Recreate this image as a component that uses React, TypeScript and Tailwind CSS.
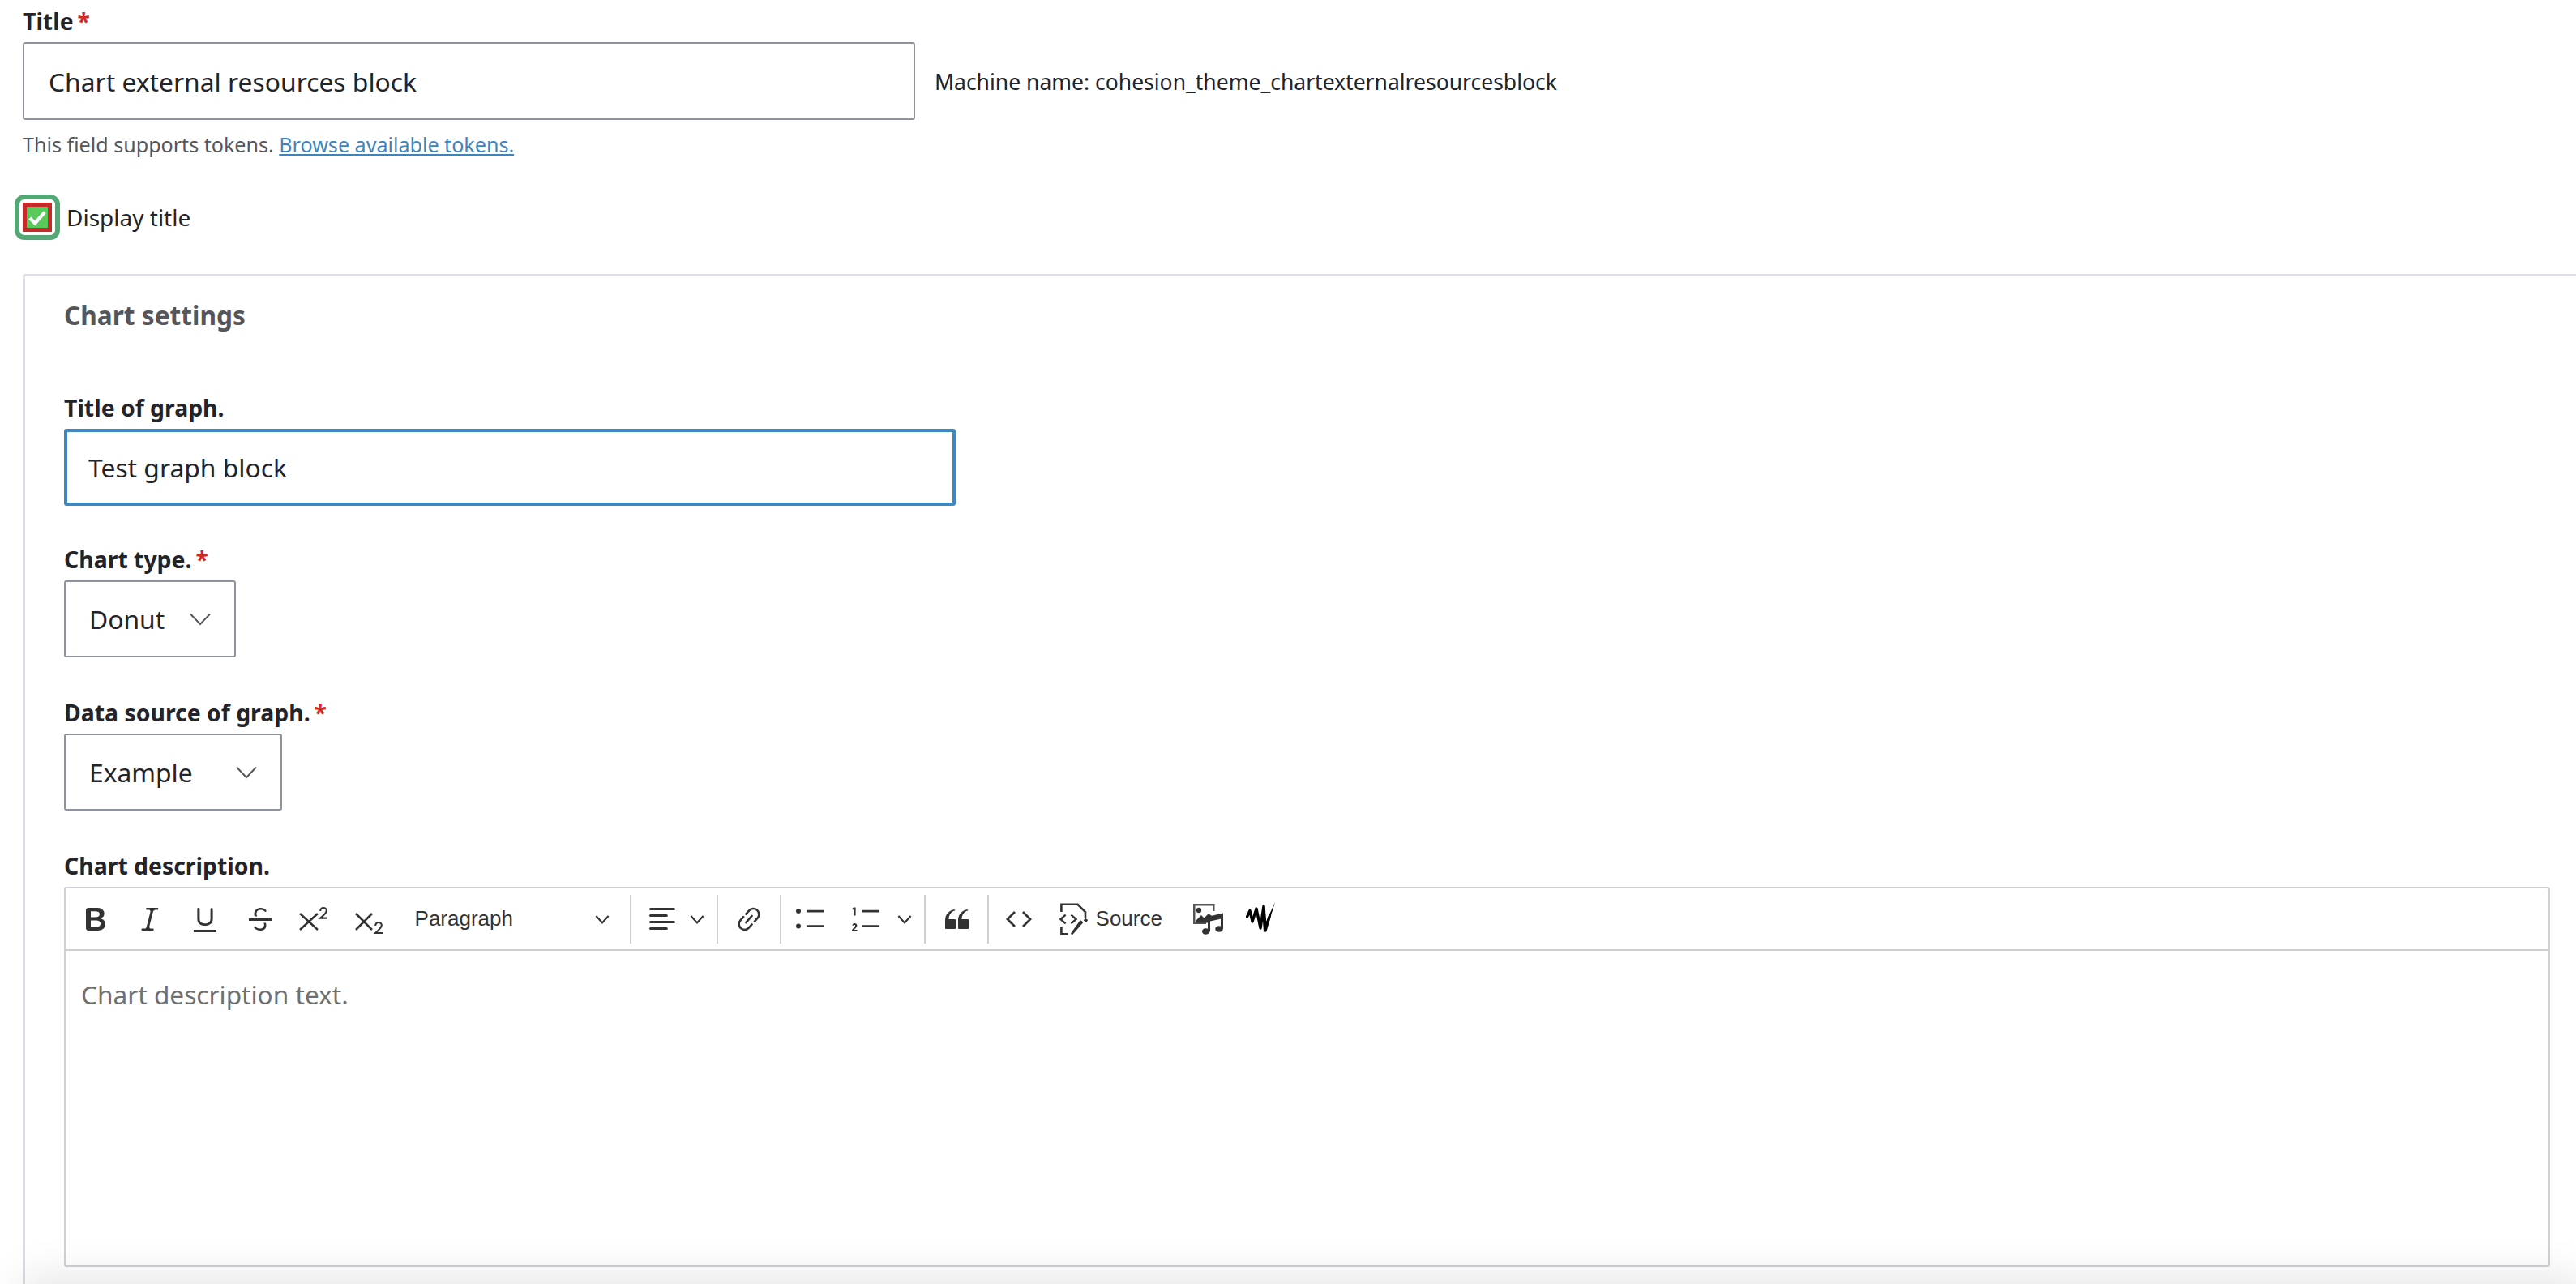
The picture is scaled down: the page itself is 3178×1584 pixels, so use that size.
import type { ReactNode } from "react";

const font = "font-['Noto_Sans','Open_Sans',sans-serif]";

function Icon({ children, className = "" }: { children: ReactNode; className?: string }) {
  return (
    <svg viewBox="0 0 20 20" className={`w-[40px] h-[40px] text-[#333333] fill-current ${className}`}>
      {children}
    </svg>
  );
}

function Btn({ w, children }: { w: string; children: ReactNode }) {
  return <div className={`${w} h-[40px] flex items-center justify-center shrink-0`}>{children}</div>;
}

function Sep() {
  return <div className="w-[2px] h-[60px] bg-[#cfd0d6] shrink-0" />;
}

function Chevron() {
  return (
    <svg viewBox="0 0 10 10" className="w-[20px] h-[20px] fill-none stroke-[#333333] stroke-[1.1]">
      <path d="M1.2 3 5 7.2 8.8 3" />
    </svg>
  );
}

function SelectChevron() {
  return (
    <svg viewBox="0 0 26 16" className="w-[26px] h-[16px] fill-none stroke-[#55565b] stroke-[2]">
      <path d="M1 1.500 13 14 25 1.500" />
    </svg>
  );
}

function Label({ text, required }: { text: string; required?: boolean }) {
  return (
    <div className="text-[28.4px] leading-[36px] font-bold text-[#232429] flex">
      <span>{text}</span>
      {required && <span className="text-[#d0291f] ml-[5px]">*</span>}
    </div>
  );
}

function FakeSelect({ value, w }: { value: string; w: string }) {
  return (
    <div className={`${w} h-[95px] mt-[8px] border-2 border-[#8e929c] rounded-[3px] flex items-center justify-between pl-[29px] pr-[29px] text-[31.8px] text-[#232429] bg-white`}>
      <span>{value}</span>
      <SelectChevron />
    </div>
  );
}

function Toolbar() {
  const line = "fill-none stroke-[#333333]";
  return (
    <div className="h-[77px] border-b-2 border-[#cfd0d6] flex items-center pl-[3px]">
      <Btn w="w-[67.6px]">
        <Icon>
          <path d="M10.187 17H5.773c-.637 0-1.092-.138-1.364-.415-.273-.277-.409-.718-.409-1.323V4.738c0-.617.14-1.062.419-1.332.279-.27.73-.406 1.354-.406h4.68c.69 0 1.288.041 1.793.124.506.083.96.242 1.36.478.341.197.644.447.906.75a3.262 3.262 0 0 1 .808 2.162c0 1.401-.722 2.426-2.167 3.075C15.05 10.175 16 11.315 16 13.01a3.756 3.756 0 0 1-2.296 3.504 6.1 6.1 0 0 1-1.517.377c-.571.073-1.238.11-2 .11zm-.217-6.217H7v4.087h3.069c1.977 0 2.965-.69 2.965-2.072 0-.707-.256-1.22-.768-1.537-.512-.319-1.277-.478-2.296-.478zM7 5.13v3.619h2.606c.729 0 1.292-.067 1.69-.2a1.6 1.6 0 0 0 .91-.765c.165-.267.247-.566.247-.897 0-.707-.26-1.176-.778-1.409-.519-.232-1.31-.348-2.375-.348H7z" />
        </Icon>
      </Btn>
      <Btn w="w-[67.6px]">
        <Icon>
          <path d="m9.586 14.633.021.004c-.036.335.095.655.393.962.082.083.173.15.274.201h1.474a.6.6 0 1 1 0 1.2H5.304a.6.6 0 0 1 0-1.2h1.15c.474-.07.809-.182 1.005-.334.157-.122.291-.32.404-.597l2.416-9.55a1.053 1.053 0 0 0-.281-.823 1.12 1.12 0 0 0-.442-.296H8.15a.6.6 0 0 1 0-1.2h6.443a.6.6 0 1 1 0 1.2h-1.195c-.376.056-.65.155-.823.296-.215.175-.423.439-.623.79l-2.366 9.347z" />
        </Icon>
      </Btn>
      <Btn w="w-[67.6px]">
        <Icon>
          <path d="M3 18v-1.5h14V18zm2.2-8V3.6c0-.4.4-.6.8-.6.3 0 .7.2.7.6v6.2c0 2 1.3 2.8 3.2 2.8 1.9 0 3.4-.9 3.4-2.9V3.6c0-.3.4-.5.8-.5.3 0 .7.2.7.5V10c0 2.7-2.2 4-4.9 4-2.6 0-4.7-1.2-4.7-4z" />
        </Icon>
      </Btn>
      <Btn w="w-[67.6px]">
        <Icon>
          <path d="M3 9.500h14V11H3z" />
          <path d="M6.500 8.200C6.300 7.700 6.200 7 6.300 6.300c.2-2 1.900-3.300 4-3.300 1.300 0 2.600.5 3.400 1.500.2.3.2.6-.1.9-.3.2-.6.2-.9-.1-.6-.7-1.400-1-2.400-1-1.400 0-2.400.8-2.600 2-.1.7.1 1.400.5 1.900zM13.400 12.300c.3.5.4 1.200.3 1.900-.2 2-1.800 2.800-3.800 2.800-1.500 0-2.800-.6-3.600-1.600-.2-.3-.2-.6.1-.9.3-.2.6-.2.9.1.6.8 1.500 1.100 2.600 1.100 1.400 0 2.300-.5 2.500-1.800.1-.6 0-1.200-.3-1.600z" />
        </Icon>
      </Btn>
      <Btn w="w-[67.6px]">
        <Icon>
          <path d="M1 6.500 12 16.500M12 6.500 1 16.500" className={`${line} stroke-[1.25]`} />
          <path d="M13.600 5c.1-1.300.8-2 1.900-2 1.100 0 1.900.8 1.900 1.800 0 1-.7 1.700-1.500 2.500l-2.300 2h4.400" className={`${line} stroke-[1.05]`} />
        </Icon>
      </Btn>
      <Btn w="w-[67.6px]">
        <Icon>
          <path d="M1.500 6.500 11.500 16.500M11.500 6.500 1.500 16.500" className={`${line} stroke-[1.25]`} />
          <path d="M13.600 14c.1-1.300.8-2 1.900-2 1.100 0 1.900.8 1.900 1.800 0 1-.7 1.700-1.500 2.500l-2.300 2.200h4.400" className={`${line} stroke-[1.05]`} />
        </Icon>
      </Btn>
      <div className="w-[287px] shrink-0 flex items-center justify-between pl-[22px] pr-[24px] font-['Liberation_Sans',sans-serif] text-[26px] text-[#333333]">
        <span>Paragraph</span>
        <Chevron />
      </div>
      <Sep />
      <div className="w-[105px] shrink-0 flex items-center pl-[18px]">
        <Icon>
          <path d="M2 3.750c0 .414.336.75.75.75h14.500a.75.75 0 1 0 0-1.500H2.750a.75.75 0 0 0-.75.75zm0 8c0 .414.336.75.75.75h14.500a.75.75 0 1 0 0-1.500H2.750a.75.75 0 0 0-.75.75zm0 4c0 .414.336.75.75.75h9.929a.75.75 0 1 0 0-1.500H2.750a.75.75 0 0 0-.75.75zm0-8c0 .414.336.75.75.75h9.929a.75.75 0 1 0 0-1.500H2.750a.75.75 0 0 0-.75.75z" />
        </Icon>
        <span className="ml-[13px] flex">
          <Chevron />
        </span>
      </div>
      <Sep />
      <Btn w="w-[76px]">
        <Icon>
          <g transform="rotate(42 10 10)" className={`${line} stroke-[1.3]`}>
            <path d="M6.500 8.800V6a3.500 3.500 0 0 1 7 0v2.800M13.500 11.200V14a3.500 3.500 0 0 1-7 0v-2.800" strokeLinecap="round" />
            <path d="M10 7.300v5.400" strokeLinecap="round" />
          </g>
        </Icon>
      </Btn>
      <Sep />
      <Btn w="w-[70px]">
        <Icon>
          <circle cx="3" cy="5" r="1.500" />
          <circle cx="3" cy="14.200" r="1.500" />
          <path d="M8 4.400h10.500v1.300H8zM8 13.600h10.500v1.300H8z" />
        </Icon>
      </Btn>
      <Btn w="w-[68px]">
        <Icon>
          <path d="M7.500 4.400h11v1.300h-11zM7.500 13.600h11v1.300h-11z" />
          <path d="M2.500 2.700h1.300v5h-1.200V4l-.8.3v-.9z" />
          <path d="M1.700 13.800c.1-.8.7-1.300 1.500-1.300.9 0 1.500.6 1.500 1.400 0 .9-.9 1.600-1.800 2.600h1.900v1H1.500v-.9c.9-1.200 2-1.900 2-2.600 0-.3-.1-.5-.4-.5-.3 0-.4.200-.4.500z" />
        </Icon>
      </Btn>
      <div className="w-[38px] shrink-0 flex pl-[4px]">
        <Chevron />
      </div>
      <Sep />
      <Btn w="w-[76px]">
        <Icon>
          <path d="M3 10.423a6.500 6.500 0 0 1 6.056-6.408l.038.67C6.448 5.423 5.354 7.663 5.220 10H9c.552 0 .5.432.5.986v4.511c0 .554-.448.503-1 .503h-5c-.552 0-.5-.449-.5-1.003v-4.574zm8 0a6.500 6.500 0 0 1 6.056-6.408l.038.67c-2.646.739-3.740 2.979-3.873 5.315H17c.552 0 .5.432.5.986v4.511c0 .554-.448.503-1 .503h-5c-.552 0-.5-.449-.5-1.003v-4.574z" />
        </Icon>
      </Btn>
      <Sep />
      <Btn w="w-[74px]">
        <Icon>
          <path d="M7.500 5.500 3 10l4.500 4.500M12.500 5.500 17 10l-4.500 4.500" className={`${line} stroke-[1.4]`} />
        </Icon>
      </Btn>
      <div className="w-[156px] shrink-0 flex items-center pl-[12px] font-['Liberation_Sans',sans-serif] text-[26px] text-[#333333]">
        <Icon>
          <path d="M1.700 5.500V.9h10.100L16.500 5.600V9" className={`${line} stroke-[1.3]`} />
          <path d="M1.700 14.500v4.600H5.500" className={`${line} stroke-[1.3]`} />
          <path d="M4.300 7.300 1.200 10l3.100 2.700M7.700 7.300 10.800 10l-3.100 2.700" className={`${line} stroke-[1.2]`} />
          <path d="M8.200 20l-.7-1.300 5.600-7.800c.4-.5 2.200.7 1.900 1.400zM15.400 10.800l1-1.500 1.700 1.200-1 1.500z" />
        </Icon>
        <span className="ml-[6px]">Source</span>
      </div>
      <div className="w-[40px] h-[40px] shrink-0 ml-[20px]">
        <svg viewBox="0 0 40 40" className="w-[40px] h-[40px]">
          <path d="M2 1h26.500v9H26V3.500H4.500v20H18V26H2z" fill="#555555" />
          <circle cx="9" cy="9" r="3.200" fill="#333333" />
          <path d="M5 22l7-7 3.500 3.500L21 13l4 3-4 8.500H5z" fill="#333333" />
          <path d="M17 17.500l22-5v6.500L23 22.500v13h-3V21z" fill="#333333" />
          <path d="M36 17h3v15h-3z" fill="#333333" />
          <ellipse cx="17.500" cy="35" rx="4.500" ry="3.800" fill="#333333" />
          <ellipse cx="34" cy="32" rx="4.800" ry="3.800" fill="#333333" />
        </svg>
      </div>
      <div className="w-[36px] h-[40px] shrink-0 ml-[27px]">
        <svg viewBox="0 0 36 40" className="w-[36px] h-[40px] -mt-[1px]">
          <path
            d="M1.500 18 5 10.500 8 24 13 8 18 32 22 5 24 35 29 18"
            fill="none"
            stroke="#000000"
            strokeWidth="3.400"
            strokeLinejoin="round"
            strokeLinecap="round"
          />
          <path d="M20 8 23 3 26 34 22 37zM25 24 36 0 29 23 24 36z" fill="#000000" />
        </svg>
      </div>
    </div>
  );
}

export default function App() {
  return (
    <div className={`relative h-[1584px] w-[3178px] overflow-hidden bg-white text-[#232429] ${font}`}>
      <div className="pl-[28px] pt-[8px]">
        <Label text="Title" required />
        <div className="flex items-center mt-[8px]">
          <input
            readOnly
            value="Chart external resources block"
            className="w-[1101px] h-[96px] border-2 border-[#8e929c] rounded-[3px] px-[30px] text-[31.8px] text-[#232429] bg-white outline-none"
          />
          <span className="ml-[24px] mt-[4px] text-[26.5px] text-[#232429]">Machine name: cohesion_theme_chartexternalresourcesblock</span>
        </div>
        <p className="mt-[12px] text-[25.1px] leading-[36px] text-[#55565b]">
          This field supports tokens.{" "}
          <a href="#" className="text-[#3d84bd] underline">Browse available tokens.</a>
        </p>
      </div>

      <div className="flex items-center mt-[44px] pl-[18px]">
        <div className="w-[56px] h-[56px] rounded-[12px] border-[6px] border-[#53a875] bg-white flex items-center justify-center">
          <div className="w-[36px] h-[36px] border-[5px] border-[#c42a2a] bg-[#5ac85a] flex items-center justify-center">
            <svg viewBox="0 0 26 26" className="w-[24px] h-[24px] fill-none stroke-white stroke-[4.5]">
              <path d="M3 14l7 7L23 6" />
            </svg>
          </div>
        </div>
        <span className="ml-[8px] text-[28px] text-[#232429]">Display title</span>
      </div>

      <fieldset className="ml-[28px] mt-[42px] h-[1300px] border-t-[3px] border-l-[3px] border-[#dedfe4] rounded-tl-[3px] pl-[48px] pt-[28px] w-[3150px]">
        <div className="text-[31.6px] leading-[40px] font-bold text-[#55565b]">Chart settings</div>
        <div className="w-[3067px]">
          <div className="mt-[76px]">
            <Label text="Title of graph." />
            <input
              readOnly
              value="Test graph block"
              className="w-[1100px] h-[95px] mt-[8px] border-[4px] border-[#3f87bf] rounded-[3px] px-[26px] text-[31.8px] text-[#232429] bg-white outline-none block"
            />
          </div>
          <div className="mt-[48px]">
            <Label text="Chart type." required />
            <FakeSelect value="Donut" w="w-[212px]" />
          </div>
          <div className="mt-[50px]">
            <Label text="Data source of graph." required />
            <FakeSelect value="Example" w="w-[269px]" />
          </div>
          <div className="mt-[50px]">
            <Label text="Chart description." />
            <div className="mt-[8px] h-[469px] border-2 border-[#cfd0d6] rounded-[3px] bg-white">
              <Toolbar />
              <div className="pl-[19px] pt-[30px] text-[31.6px] text-[#6f6f6f]">Chart description text.</div>
            </div>
          </div>
        </div>
      </fieldset>

      <div className="absolute left-[36px] right-0 top-[1584px] h-[60px] bg-white shadow-[0_0_50px_10px_rgba(0,0,0,0.1)]" />
    </div>
  );
}
